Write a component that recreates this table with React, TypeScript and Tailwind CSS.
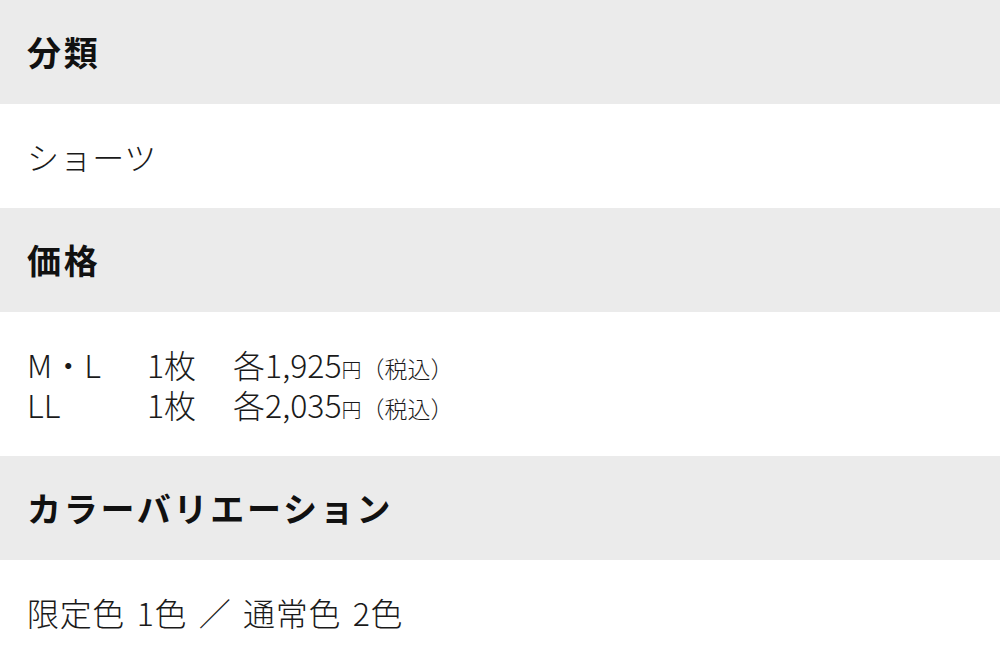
import React from 'react';

const font = { fontFamily: '"Noto Sans CJK JP", "Noto Sans", sans-serif' };

const prices = [
  { size: 'M・L', qty: '1枚', price: '1,925' },
  { size: 'LL', qty: '1枚', price: '2,035' },
];

const Heading: React.FC<{ children: React.ReactNode }> = ({ children }) => (
  <div className="bg-[#ebebeb] px-[27px] py-[30px]">
    <h2 className="text-[34px] leading-[44px] font-bold tracking-[0.08em] text-[#111]">{children}</h2>
  </div>
);

export default function App() {
  return (
    <div className="w-[1000px] min-h-[666px] bg-white text-[#1a1a1a] font-light" style={font}>
      <Heading>分類</Heading>
      <div className="px-[27px] py-[30px] text-[32px] leading-[44px] tracking-[0.02em]">ショーツ</div>

      <Heading>価格</Heading>
      <div className="px-[27px] py-[32px] text-[32px]">
        {prices.map((p) => (
          <div key={p.size} className="flex h-[40px] items-baseline leading-[40px]">
            <span className="w-[120px]">{p.size}</span>
            <span className="w-[86px]">{p.qty}</span>
            <span>各{p.price}</span>
            <span className="text-[20px]">円</span>
            <span className="text-[23px]">（税込）</span>
          </div>
        ))}
      </div>

      <Heading>カラーバリエーション</Heading>
      <div className="px-[27px] py-[30px] text-[32px] leading-[44px] tracking-[0.02em] [word-spacing:4px]">
        限定色 1色 ／ 通常色 2色
      </div>
    </div>
  );
}
